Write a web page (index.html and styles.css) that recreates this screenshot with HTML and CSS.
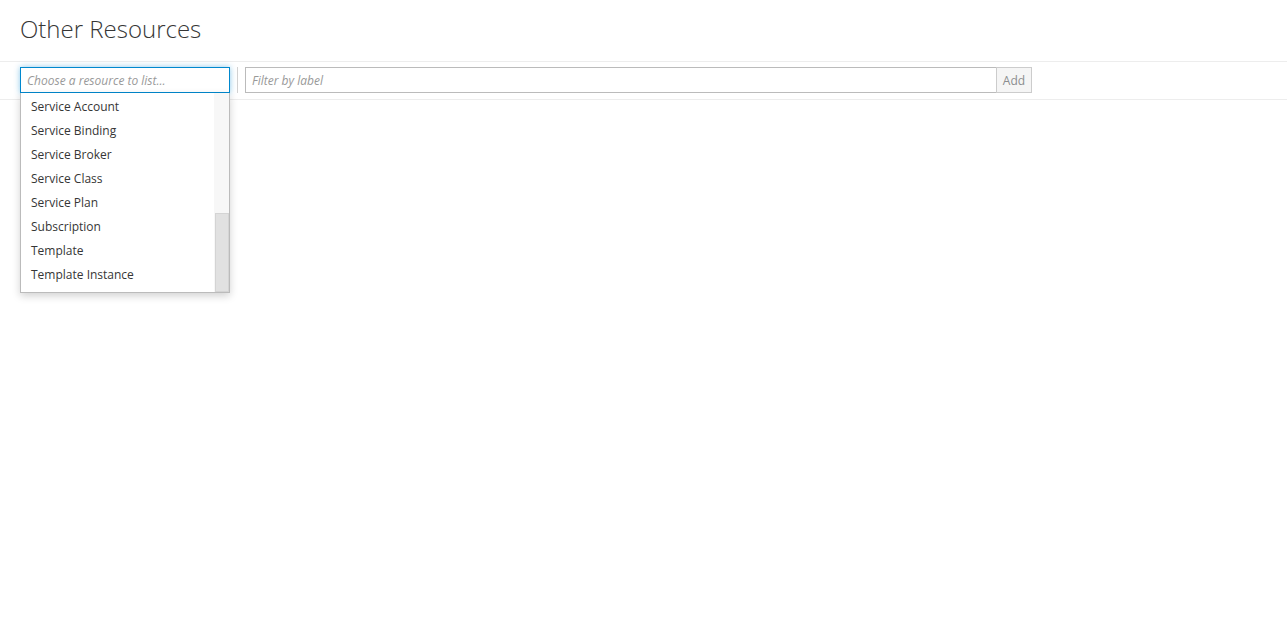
FILE: index.html
```html
<!DOCTYPE html>
<html lang="en">
  <head>
    <meta charset="UTF-8" />
    <meta name="viewport" content="width=device-width, initial-scale=1.0" />
    <title>Other Resources</title>
    <link rel="stylesheet" href="styles.css">
  </head>
  <body>
    <h1 class="page-title">Other Resources</h1>
    <div class="toolbar">
      <div class="picker">
        <div class="picker-box">Choose a resource to list...</div>
        <div class="picker-menu">
          <ul class="picker-list">
            <li>Service Account</li>
            <li>Service Binding</li>
            <li>Service Broker</li>
            <li>Service Class</li>
            <li>Service Plan</li>
            <li>Subscription</li>
            <li>Template</li>
            <li>Template Instance</li>
          </ul>
          <div class="fake-scroll">
            <div class="fake-thumb"></div>
          </div>
        </div>
      </div>
      <div class="divider"></div>
      <div class="filter">
        <input class="filter-input" type="text" placeholder="Filter by label" />
        <button class="filter-add" type="button">Add</button>
      </div>
    </div>
  </body>
</html>
```

FILE: styles.css
```css
html,
body {
  min-height: 100%;
  height: 100%;
}
body {
  margin: 0;
  min-height: 636px;
  font-family: "Open Sans", "Liberation Sans", sans-serif;
  font-size: 12px;
  color: #363636;
  background: #fff;
}
.page-title {
  margin: 0;
  padding: 13px 20px 0;
  height: 48px;
  font-size: 24px;
  font-weight: 300;
  line-height: 32px;
  color: #363636;
}
.toolbar {
  display: flex;
  align-items: center;
  padding: 5px 20px 6px;
  border-top: 1px solid #ededed;
  border-bottom: 1px solid #ededed;
}
.picker {
  position: relative;
  width: 210px;
}
.picker-box {
  box-sizing: border-box;
  height: 26px;
  padding: 1px 6px 0;
  line-height: 24px;
  border: 1px solid #0088ce;
  box-shadow: 0 0 6px rgba(0, 136, 206, 0.45);
  font-style: italic;
  color: #999;
  background: #fff;
}
.picker-menu {
  position: absolute;
  top: 26px;
  left: 0;
  box-sizing: border-box;
  width: 210px;
  height: 200px;
  display: flex;
  border: 1px solid #bbb;
  border-top: 0;
  background: #fff;
  box-shadow: 0 3px 8px rgba(0, 0, 0, 0.18);
  z-index: 2;
}
.picker-list {
  flex: 1;
  margin: 0;
  padding: 2px 0 0;
  list-style: none;
}
.picker-list li {
  height: 24px;
  line-height: 24px;
  padding-left: 10px;
  white-space: nowrap;
}
.fake-scroll {
  width: 15px;
  display: flex;
  flex-direction: column;
  justify-content: flex-end;
  background: #f7f7f7;
}
.fake-thumb {
  box-sizing: border-box;
  height: 79px;
  margin: 0 0 0 1px;
  border: 1px solid #d4d4d4;
  background: #e1e1e1;
}
.divider {
  width: 1px;
  height: 26px;
  margin: 0 7px;
  background: #d1d1d1;
}
.filter {
  display: flex;
  height: 26px;
}
.filter-input {
  box-sizing: border-box;
  width: 751px;
  height: 26px;
  margin: 0;
  padding: 0 6px;
  border: 1px solid #bbb;
  border-right: 0;
  font-family: inherit;
  font-size: 12px;
  outline: none;
}
.filter-input::placeholder {
  font-style: italic;
  color: #999;
}
.filter-add {
  box-sizing: border-box;
  width: 36px;
  height: 26px;
  margin: 0;
  padding: 0;
  border: 1px solid #ccc;
  background: #f5f5f5;
  font-family: inherit;
  font-size: 12px;
  color: #8b8d8f;
}
```
